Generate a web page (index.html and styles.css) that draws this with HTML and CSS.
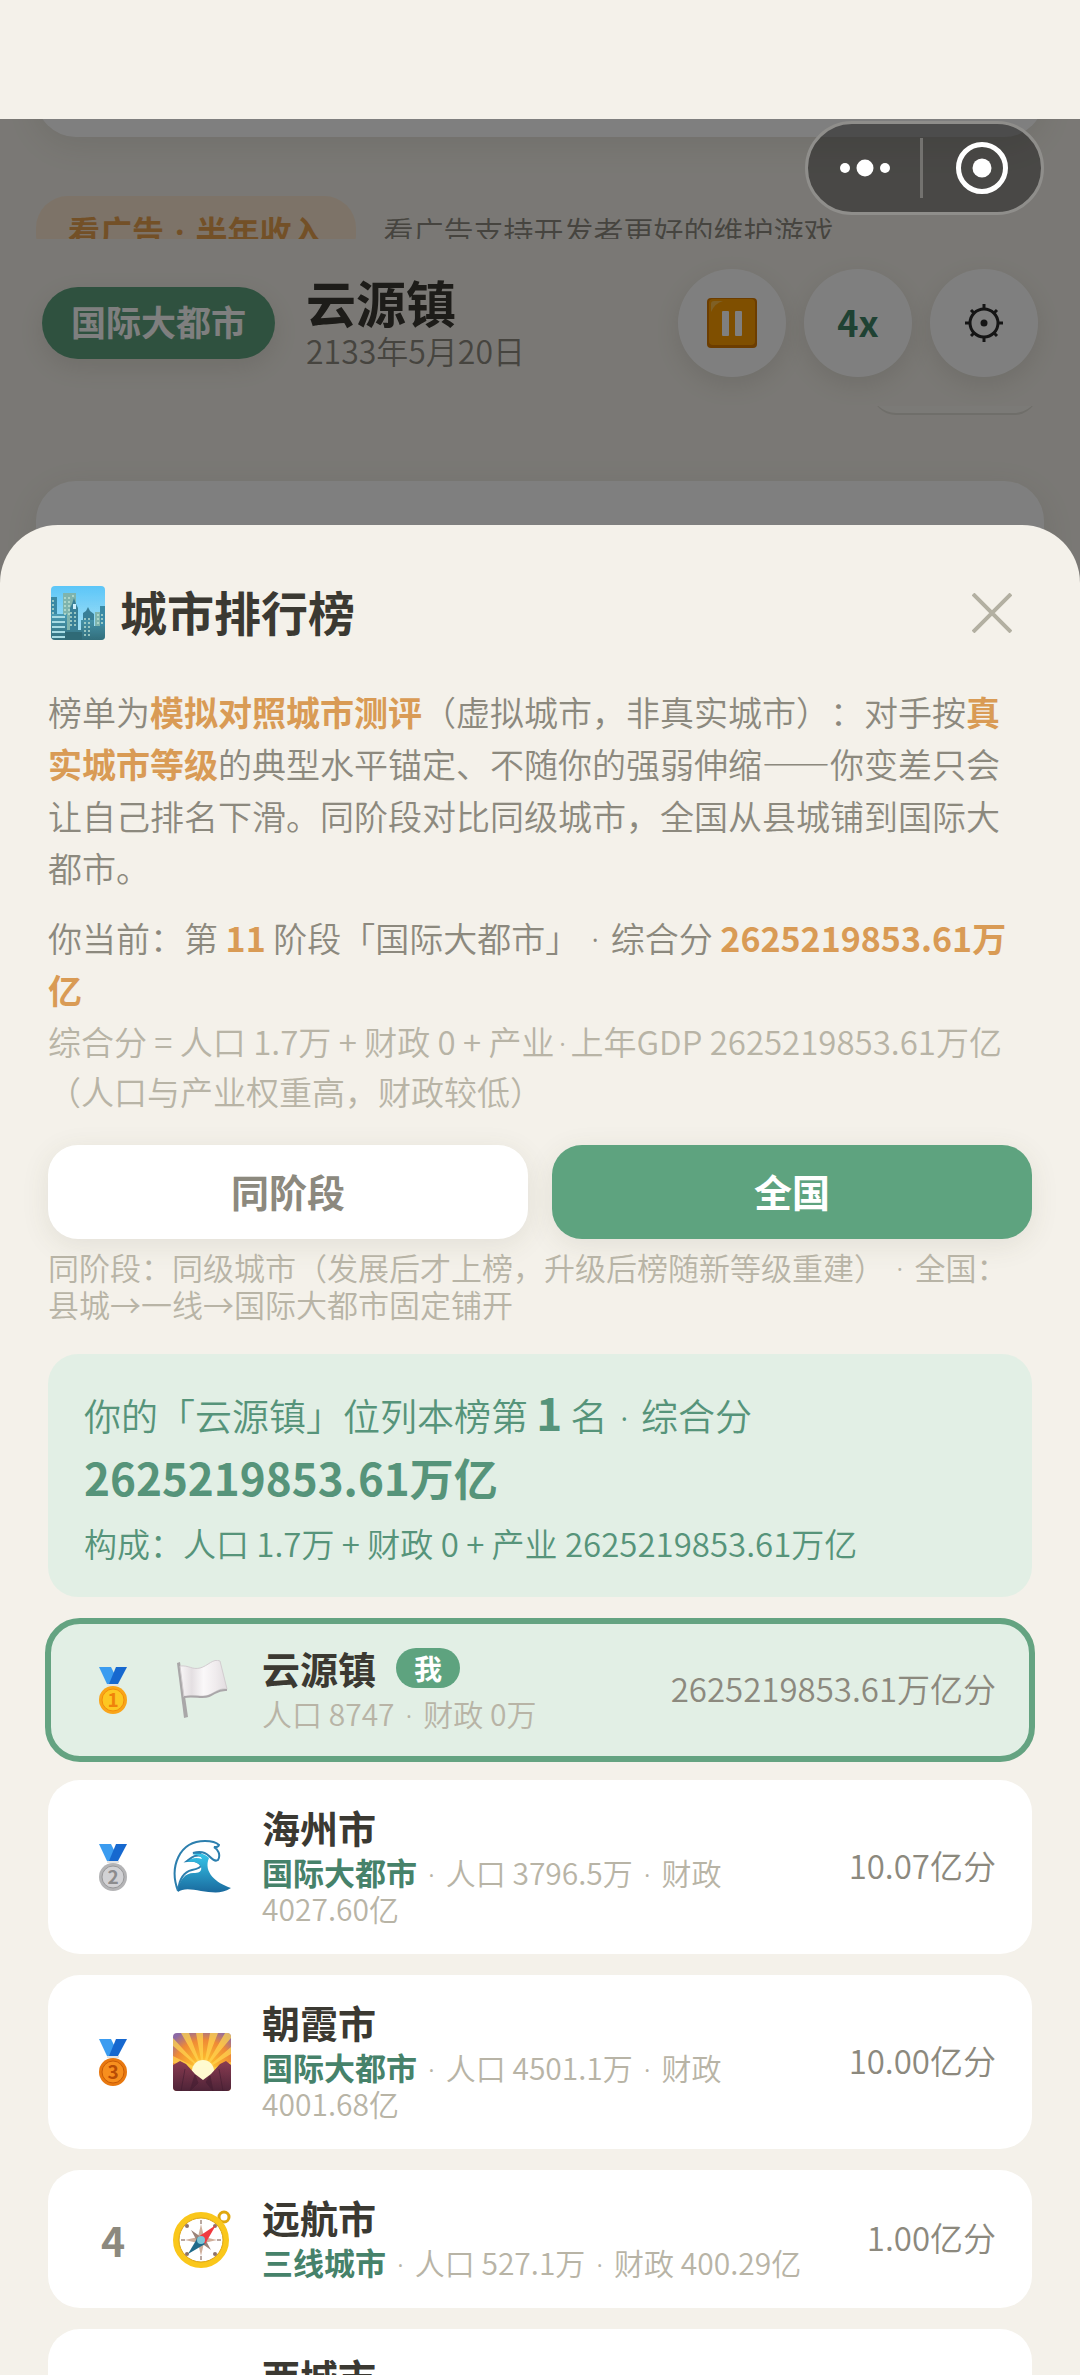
FILE: index.html
```html
<!DOCTYPE html>
<html lang="zh-CN">
<head>
<meta charset="utf-8">
<meta name="viewport" content="width=device-width, initial-scale=1">
<title>城市排行榜</title>
<link rel="stylesheet" href="styles.css">
</head>
<body>
<svg class="defs" aria-hidden="true">
  <defs>
    <linearGradient id="sky" x1="0" y1="0" x2="0" y2="1"><stop offset="0" stop-color="#5cc6f8"/><stop offset="1" stop-color="#b5e6f5"/></linearGradient>
    <linearGradient id="haze" x1="0" y1="0" x2="0" y2="1"><stop offset="0" stop-color="#4b9db5"/><stop offset="1" stop-color="#336f7c"/></linearGradient>
    <linearGradient id="sea" x1="0" y1="0" x2="0" y2="1"><stop offset="0" stop-color="#35c6ea"/><stop offset="1" stop-color="#1a6a9e"/></linearGradient>
    <radialGradient id="dawn" cx=".52" cy=".65" r=".75"><stop offset="0" stop-color="#fff3a0"/><stop offset=".3" stop-color="#fcb72d"/><stop offset=".7" stop-color="#ef8a35"/><stop offset="1" stop-color="#8d6aa6"/></radialGradient>
    <linearGradient id="hill" x1="0" y1="0" x2="0" y2="1"><stop offset="0" stop-color="#8b3c52"/><stop offset="1" stop-color="#4e2438"/></linearGradient>
    <linearGradient id="cloth" x1="0" y1="0" x2="1" y2="0"><stop offset="0" stop-color="#f8f6f7"/><stop offset=".25" stop-color="#e4dfe2"/><stop offset=".5" stop-color="#faf8f9"/><stop offset=".75" stop-color="#f0ecee"/><stop offset="1" stop-color="#e2dde0"/></linearGradient>
    <symbol id="ribbon" viewBox="0 0 30 50">
      <path d="M1 2h12l4 8-4 9H9z" fill="#3b9cf0"/>
      <path d="M29 2H18l-7 17h9z" fill="#1668cf"/>
      <path d="M9 20h12" stroke="#e3e3e3" stroke-width="2"/>
    </symbol>
  </defs>
</svg>

<div class="app">
  <div class="safe-area"></div>
  <div class="viewport">

    <div class="city" aria-hidden="true">
      <div class="card card-above"></div>
      <div class="ad-row">
        <span class="ad-pill">看广告 <span class="dot">·</span> 半年收入</span>
        <span class="ad-note">看广告支持开发者更好的维护游戏</span>
      </div>
      <header class="topbar">
        <span class="level">国际大都市</span>
        <div class="town">
          <div class="town-name">云源镇</div>
          <div class="town-date">2133年5月20日</div>
        </div>
        <div class="controls">
          <button class="round" type="button" tabindex="-1">
            <svg width="50" height="50" viewBox="0 0 50 50"><rect width="50" height="50" rx="4" fill="#d87a00"/><rect x="2" y="1" width="46" height="46" rx="4" fill="#ff9f00"/><path d="M4 14V6q0-3 3-3h9q-8 2-12 11z" fill="#ffc04a"/><rect x="15" y="13" width="7" height="25" rx="1" fill="#fff"/><rect x="28" y="13" width="7" height="25" rx="1" fill="#fff"/></svg>
          </button>
          <button class="round speed" type="button" tabindex="-1">4x</button>
          <button class="round" type="button" tabindex="-1">
            <svg width="38" height="38" viewBox="0 0 38 38" fill="none" stroke="#2b2b2b" stroke-width="3"><circle cx="19" cy="19" r="14"/><circle cx="19" cy="19" r="3.500" fill="#2b2b2b" stroke="none"/><path d="M19 0v5M19 33v5M0 19h5M33 19h5M6 6l3 3M29 29l3 3M32 6l-3 3M9 29l-3 3"/></svg>
          </button>
        </div>
      </header>
      <div class="chip-edge"><div class="chip"></div></div>
      <div class="card card-below"></div>
    </div>
    <div class="scrim"></div>

    <div class="capsule">
      <button class="capsule-more" type="button" aria-label="更多"><svg width="52" height="20" viewBox="0 0 52 20" fill="#fff"><circle cx="6" cy="10" r="5"/><circle cx="26" cy="10" r="8.500"/><circle cx="46" cy="10" r="5"/></svg></button>
      <button class="capsule-exit" type="button" aria-label="关闭小程序"><svg width="54" height="54" viewBox="0 0 54 54"><circle cx="27" cy="27" r="23.500" fill="none" stroke="#fff" stroke-width="5"/><circle cx="27" cy="27" r="9.500" fill="#fff"/></svg></button>
    </div>

    <main class="sheet" role="dialog" aria-labelledby="sheet-title">
      <div class="sheet-head">
        <svg width="54" height="54" viewBox="0 0 54 54" aria-hidden="true">
          <clipPath id="tile"><rect width="54" height="54" rx="4"/></clipPath>
          <g clip-path="url(#tile)">
            <rect width="54" height="54" fill="url(#sky)"/>
            <path d="M12 7h13v40H12zM44 26h10v28H44z" fill="#7fb4ad"/>
            <path d="M0 11h6v20H0zM49 20h5v24h-5z" fill="#3b8ba5"/>
            <path d="M19 22l2-4 2-6 2 6 2 4v24h-8zM32 27l3-2 2-4 2 4 4 3v20H32z" fill="#3a7f97"/>
            <path d="M22 18h3v5h-3z" fill="#cfeefa"/>
            <path d="M0 28h16v16h14V34h13v6h11v14H0z" fill="url(#haze)"/>
            <path d="M1 31h13M1 36h13M1 41h13M1 46h13M1 51h13" stroke="#a8dce4" stroke-width="2"/>
            <path d="M14 11v18M18 11v18M22 9v4M47 28v12M51 28v12M20 26v16M24 26v16M34 32v18M38 32v18M2 14v14" stroke="#bfe3d4" stroke-width="2" stroke-dasharray="2 2" opacity=".7"/>
            <path d="M14 46h17v8H14z" fill="#2f6a76"/>
          </g>
        </svg>
        <h1 id="sheet-title">城市排行榜</h1>
        <button class="close" type="button" aria-label="关闭"><svg width="40" height="40" viewBox="0 0 40 40"><path d="M1 1l38 38M39 1L1 39" stroke="#b3b0a2" stroke-width="4"/></svg></button>
      </div>

      <p class="intro">榜单为<b>模拟对照城市测评</b>（虚拟城市，非真实城市）：对手按<b>真实城市等级</b>的典型水平锚定、不随你的强弱伸缩——你变差只会让自己排名下滑。同阶段对比同级城市，全国从县城铺到国际大都市。</p>
      <p class="current">你当前：第 <b>11</b> 阶段「国际大都市」 <span class="dot">·</span> 综合分 <b>2625219853.61万亿</b></p>
      <p class="formula">综合分 = 人口 1.7万 + 财政 0 + 产业<span class="dot">·</span>上年GDP 2625219853.61万亿（人口与产业权重高，财政较低）</p>

      <div class="tabs">
        <button class="tab" type="button" aria-pressed="false">同阶段</button>
        <button class="tab tab-on" type="button" aria-pressed="true">全国</button>
      </div>
      <p class="hint">同阶段：同级城市（发展后才上榜，升级后榜随新等级重建） <span class="dot">·</span> 全国：县城→一线→国际大都市固定铺开</p>

      <section class="summary">
        <p class="summary-main">你的「云源镇」位列本榜第 <b>1</b> 名 <span class="dot">·</span> 综合分 <b>2625219853.61万亿</b></p>
        <p class="summary-sub">构成：人口 1.7万 + 财政 0 + 产业 2625219853.61万亿</p>
      </section>

      <ol class="board">
        <li class="row row-me">
          <span class="rank"><svg width="30" height="50" viewBox="0 0 30 50" role="img" aria-label="第1名"><use href="#ribbon"/><circle cx="15" cy="35" r="14" fill="#f9a51a"/><circle cx="15" cy="35" r="11" fill="#fdc722" stroke="#f28c0c"/><text x="15" y="42" class="medal-no" fill="#f0820a">1</text></svg></span>
          <span class="emblem"><svg width="58" height="60" viewBox="0 0 58 60" aria-hidden="true"><path d="M4 3l3-1 8 55-4 1z" fill="#a9a7a8"/><path d="M7 6c9-1 12 4 20 2S40-2 47 1l7 28c-8-1-11 3-18 6s-14-1-25 2z" fill="url(#cloth)" stroke="#d2cdd0"/><path d="M11 37c11-2 18 2 25-1s10-7 18-6" fill="none" stroke="#aaa6a9" stroke-width="2"/></svg></span>
          <div class="info"><div class="name">云源镇<span class="me">我</span></div><div class="meta">人口 8747 <span class="dot">·</span> 财政 0万</div></div>
          <span class="score">2625219853.61万亿分</span>
        </li>
        <li class="row">
          <span class="rank"><svg width="30" height="50" viewBox="0 0 30 50" role="img" aria-label="第2名"><use href="#ribbon"/><circle cx="15" cy="35" r="14" fill="#b4b4b6"/><circle cx="15" cy="35" r="11" fill="#d2d2d5" stroke="#98989a"/><text x="15" y="42" class="medal-no" fill="#8c8c8e">2</text></svg></span>
          <span class="emblem"><svg width="58" height="56" viewBox="0 0 58 56" aria-hidden="true"><path d="M5 52C-4 28 6 2 32 2c6 0 11 1 14 4-1 3-4 2-5 2 4 2 7 8 4 13-3 2-6-1-9-4s-9-5-16-3c6 0 9 2 10 3-8-2-11 1-16 5 7-1 12 1 14 4 0 3-4 4-9 5C10 33 6 42 5 52z" fill="#fff" stroke="#2c7fae" stroke-width="2"/><path d="M5 53c1-14 9-20 17-19 5 0 7-3 6-6-2-4-6-6-14-5 4-4 9-5 15-3-1-3-5-4-10-5 9-1 14 0 17 4-6 14 7 25 22 30-11 7-20 4-30 3-10-2-18-3-23 1z" fill="url(#sea)"/></svg></span>
          <div class="info"><div class="name">海州市</div><div class="meta"><b>国际大都市</b> <span class="dot">·</span> 人口 3796.5万 <span class="dot">·</span> 财政 4027.60亿</div></div>
          <span class="score">10.07亿分</span>
        </li>
        <li class="row">
          <span class="rank"><svg width="30" height="50" viewBox="0 0 30 50" role="img" aria-label="第3名"><use href="#ribbon"/><circle cx="15" cy="35" r="14" fill="#e8780f"/><circle cx="15" cy="35" r="11" fill="#f78f1e" stroke="#c95b06"/><text x="15" y="42" class="medal-no" fill="#b84c05">3</text></svg></span>
          <span class="emblem"><svg width="58" height="58" viewBox="0 0 58 58" aria-hidden="true">
            <clipPath id="tile2"><rect width="58" height="58" rx="4"/></clipPath>
            <g clip-path="url(#tile2)"><rect width="58" height="58" fill="url(#dawn)"/>
            <path d="M30 38L0 30v-7zM30 38L0 13V5zM30 38L8 0h8zM30 38L23 0h7zM30 38L37 0h8zM30 38L52 0h6v5zM30 38l28-24v7zM30 38l28-9v7z" fill="#ffd34d" opacity=".75"/>
            <circle cx="30" cy="38" r="11" fill="#fffbd0"/>
            <path d="M0 32l7-4 6 3 9 10 8 6 8-6 9-10 6-3 5 4v26H0z" fill="url(#hill)"/>
            <path d="M12 36l-4 22M22 42l-5 16 8-8zM46 36l4 22M37 43l3 15-7-9z" stroke="#431d31" fill="#431d31" opacity=".6"/></g></svg></span>
          <div class="info"><div class="name">朝霞市</div><div class="meta"><b>国际大都市</b> <span class="dot">·</span> 人口 4501.1万 <span class="dot">·</span> 财政 4001.68亿</div></div>
          <span class="score">10.00亿分</span>
        </li>
        <li class="row">
          <span class="rank">4</span>
          <span class="emblem"><svg width="58" height="58" viewBox="0 0 58 58" aria-hidden="true"><circle cx="51" cy="7" r="5" fill="none" stroke="#e0a80e" stroke-width="3"/><circle cx="28" cy="30" r="25" fill="#fff" stroke="#fac71b" stroke-width="6"/><circle cx="28" cy="30" r="22" fill="none" stroke="#dca311"/><path d="M28 10v4M28 46v4M8 30h4M44 30h4" stroke="#b9a7a0" stroke-width="2"/><g fill="#8d7268"><circle cx="14" cy="16" r="2"/><circle cx="42" cy="16" r="2"/><circle cx="14" cy="44" r="2"/><circle cx="42" cy="44" r="2"/></g><path d="M28 14l3 13 13 3-13 3-3 13-3-13-13-3 13-3z" fill="#cfae9a"/><path d="M18 20l10 7-4 4zM38 40l-10-7 4-4z" fill="#9b8378"/><path d="M43 15L32 34l-7-7z" fill="#f03a3f"/><path d="M15 44l10-17 7 7z" fill="#1f6a8a"/><circle cx="28" cy="30" r="4" fill="#7cc6d8"/></svg></span>
          <div class="info"><div class="name">远航市</div><div class="meta"><b>三线城市</b> <span class="dot">·</span> 人口 527.1万 <span class="dot">·</span> 财政 400.29亿</div></div>
          <span class="score">1.00亿分</span>
        </li>
        <li class="row row-peek">
          <div class="info"><div class="name">西城市</div></div>
        </li>
      </ol>
    </main>
  </div>
</div>
</body>
</html>
```
FILE: styles.css
```css
* { box-sizing: border-box; }
html, body { margin: 0; height: 100%; }
body {
  font-family: "Noto Sans CJK SC", "Noto Sans", sans-serif;
  font-weight: 350;
  color: #8c897e;
  background: #f4f1ea;
  text-spacing-trim: space-all;
}
p, h1, ol { margin: 0; padding: 0; }
b { font-weight: 700; }
svg { display: block; }
button { border: 0; padding: 0; font: inherit; color: inherit; background: none; }
.defs { position: absolute; width: 0; height: 0; }
.dot { padding: 0 4px; font-family: "Noto Sans", sans-serif; line-height: 1; }

.app { display: flex; flex-direction: column; height: 100vh; overflow: hidden; }
.safe-area { flex: none; height: 119px; }
.viewport { position: relative; flex: 1; min-height: 0; display: flex; flex-direction: column; overflow: hidden; }

/* town screen behind the sheet */
.city { position: absolute; inset: 0; background: #f4f1ea; }
.card { margin: 0 36px; background: #fff; border-radius: 40px; box-shadow: 0 8px 32px rgba(80, 75, 50, .1); }
.card-above { height: 80px; margin-top: -62px; }
.card-below { height: 160px; margin-top: 66px; }
.ad-row { display: flex; gap: 28px; height: 43px; margin-top: 59px; padding: 0 36px; line-height: 68px; overflow: hidden; }
.ad-pill { height: 70px; padding: 0 32px; border-radius: 32px; background: #fbe6d0; color: #e6a04e; font-size: 32px; font-weight: 700; }
.ad-note { font-size: 30px; }
.topbar { display: flex; align-items: center; height: 167px; padding: 0 42px; }
.level { height: 72px; padding: 0 29px; border-radius: 36px; background: #5ea37f; color: #fff; font-size: 35px; font-weight: 700; line-height: 68px; box-shadow: 0 8px 24px rgba(80, 75, 50, .12); }
.town { flex: 1; padding-left: 31px; }
.town-name { font-size: 50px; font-weight: 700; line-height: 54px; color: #3b3932; }
.town-date { font-size: 32px; line-height: 44px; }
.controls { display: flex; gap: 18px; }
.round { display: flex; align-items: center; justify-content: center; width: 108px; height: 108px; border-radius: 50%; background: #fff; box-shadow: 0 8px 24px rgba(80, 75, 50, .12); }
.speed { padding-bottom: 4px; color: #3f8467; font-size: 36px; font-weight: 700; }
.chip-edge { display: flex; flex-direction: column; align-items: flex-end; justify-content: flex-end; height: 9px; padding: 0 42px; overflow: hidden; }
.chip { flex: none; width: 166px; height: 60px; border-radius: 24px; background: #f7f4ee; border-bottom: 2px solid #dfdcd4; }
.scrim { position: absolute; inset: 0; background: rgba(0, 0, 0, .5); }

/* mini-program capsule */
.capsule { position: absolute; top: 2px; right: 36px; display: flex; width: 239px; height: 94px; border: 3px solid #8f8e8b; border-radius: 47px; background: rgba(0, 0, 0, .4); }
.capsule button { display: flex; align-items: center; justify-content: center; }
.capsule-more { flex: none; width: 114px; }
.capsule-exit { flex: 1; position: relative; }
.capsule-exit::before { content: ""; position: absolute; left: -2px; top: 14px; bottom: 14px; width: 3px; background: #73726f; }

/* ranking sheet */
.sheet { position: relative; flex: 1; min-height: 0; margin-top: 406px; padding: 60px 48px 0; border-radius: 58px 58px 0 0; background: #f4f1ea; overflow: hidden; }
.sheet-head { display: flex; align-items: center; height: 56px; margin-bottom: 45px; padding: 0 20px 0 3px; }
h1 { flex: 1; padding: 0 0 4px 15px; color: #3b3932; font-size: 47px; font-weight: 700; line-height: 52px; }
.intro, .current { font-size: 34px; line-height: 52px; }
.current { margin-top: 18px; }
.intro b, .current b { color: #d99b55; }
.formula { color: #b8b4a6; font-size: 33px; line-height: 50px; }
.tabs { display: grid; grid-template-columns: 1fr 1fr; gap: 24px; margin-top: 29px; }
.tab { height: 94px; padding-bottom: 4px; border-radius: 30px; background: #fff; color: #8c897e; font-size: 38px; font-weight: 700; box-shadow: 0 6px 28px rgba(80, 75, 50, .1); }
.tab-on { background: #5ea37f; color: #fff; }
.hint { position: relative; margin-top: 9px; color: #b8b4a6; font-size: 31px; line-height: 37px; }

.summary { margin-top: 32px; padding: 29px 36px; border-radius: 30px; background: #e2efe5; color: #56947a; }
.summary-main { font-size: 37px; line-height: 65px; }
.summary-main b { font-size: 44px; line-height: 44px; }
.summary-sub { margin-top: 5px; font-size: 33px; line-height: 50px; }

.board { display: flex; flex-direction: column; gap: 21px; margin: 24px -48px 0; padding: 0 48px; list-style: none; }
.row { flex: none; display: grid; grid-template-columns: 58px 60px 1fr auto; align-items: center; gap: 30px; min-height: 138px; padding: 24px 36px; border-radius: 32px; background: #fff; }
.row-me { background: #e2efe5; outline: 6px solid #64a381; outline-offset: -3px; }
.rank { display: flex; justify-content: center; font-size: 41px; font-weight: 700; line-height: 50px; }
.emblem { display: flex; justify-content: center; }
.info, .score { padding-bottom: 4px; }
.name { display: flex; align-items: center; gap: 20px; height: 46px; margin-bottom: 4px; color: #3b3932; font-size: 38px; font-weight: 700; line-height: 46px; }
.me { padding: 0 18px; border-radius: 20px; background: #5ea37f; color: #fff; font-size: 28px; line-height: 40px; }
.meta { color: #b8b4a6; font-size: 30px; line-height: 36px; }
.meta b { color: #46826a; font-size: 31px; line-height: 31px; }
.score { font-size: 33px; line-height: 50px; }
.medal-no { font-size: 19px; font-weight: 700; text-anchor: middle; }
.row-peek { align-items: start; }
.row-peek .info { grid-column: 3; }
```
